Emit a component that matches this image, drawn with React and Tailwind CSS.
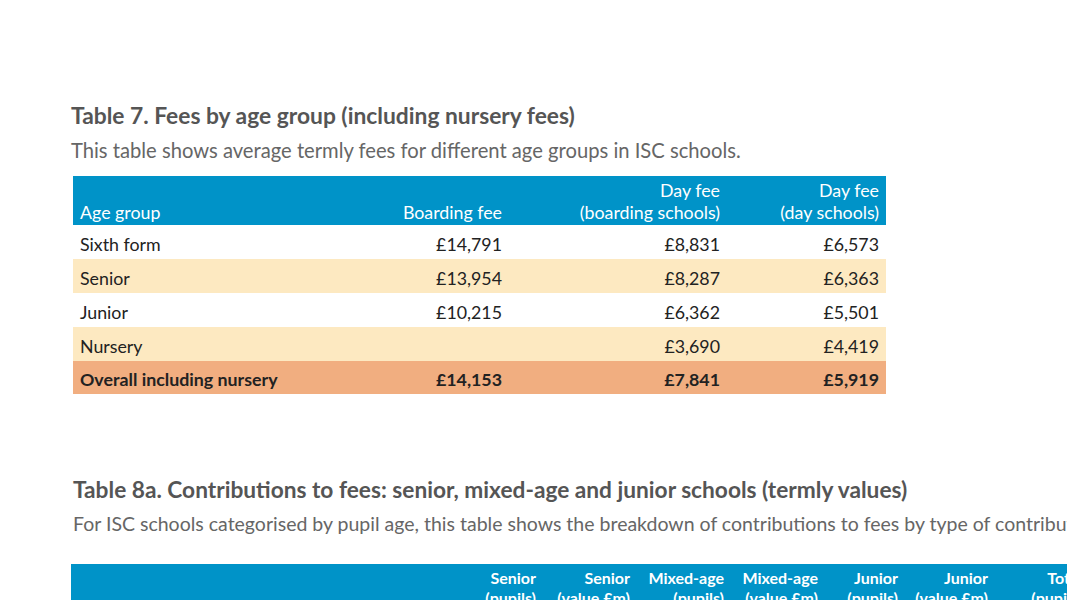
import React from 'react'

const rows = [
    { label: 'Sixth form', boarding: '£14,791', dayBoarding: '£8,831', day: '£6,573', band: false },
    { label: 'Senior', boarding: '£13,954', dayBoarding: '£8,287', day: '£6,363', band: true },
    { label: 'Junior', boarding: '£10,215', dayBoarding: '£6,362', day: '£5,501', band: false },
    { label: 'Nursery', boarding: '', dayBoarding: '£3,690', day: '£4,419', band: true },
]

const contribHeads = [
    ['Senior', '(pupils)', 'w-[94px]'],
    ['Senior', '(value £m)', 'w-[94px]'],
    ['Mixed-age', '(pupils)', 'w-[94px]'],
    ['Mixed-age', '(value £m)', 'w-[94px]'],
    ['Junior', '(pupils)', 'w-[80px]'],
    ['Junior', '(value £m)', 'w-[90px]'],
    ['Total', '(pupils)', 'w-[94px]'],
]

const App = () => {
    return (
        <div className="w-[1067px] h-[600px] overflow-hidden bg-white font-['Lato',sans-serif]">
            <div className="pt-[101px] pl-[71px]">
                <h2 className="text-[22.8px] leading-[28px] font-bold text-[#555555] whitespace-nowrap">
                    Table 7. Fees by age group (including nursery fees)
                </h2>
                <p className="mt-[8px] text-[20.2px] leading-[26px] text-[#666666] whitespace-nowrap">
                    This table shows average termly fees for different age groups in ISC schools.
                </p>

                <div className="mt-[13px] ml-[2px] w-[813px] text-[17.8px] text-[#222222]">
                    <div className="grid grid-cols-[300px_136px_218px_159px] h-[49px] bg-[#0093c8] text-white items-end pb-[2px] leading-[22px]">
                        <div className="pl-[7px]">Age group</div>
                        <div className="text-right pr-[7px]">Boarding fee</div>
                        <div className="text-right pr-[7px]">Day fee<br />(boarding schools)</div>
                        <div className="text-right pr-[7px]">Day fee<br />(day schools)</div>
                    </div>
                    {rows.map((r) => (
                        <div key={r.label}
                             className={r.band
                                 ? 'grid grid-cols-[300px_136px_218px_159px] h-[34px] items-center pt-[5px] bg-[#fde9c1]'
                                 : 'grid grid-cols-[300px_136px_218px_159px] h-[34px] items-center pt-[5px] bg-white'}>
                            <div className="pl-[7px]">{r.label}</div>
                            <div className="text-right pr-[7px]">{r.boarding}</div>
                            <div className="text-right pr-[7px]">{r.dayBoarding}</div>
                            <div className="text-right pr-[7px]">{r.day}</div>
                        </div>
                    ))}
                    <div className="grid grid-cols-[300px_136px_218px_159px] h-[33px] items-center pt-[3px] bg-[#f1ae80] font-bold">
                        <div className="pl-[7px]">Overall including nursery</div>
                        <div className="text-right pr-[7px]">£14,153</div>
                        <div className="text-right pr-[7px]">£7,841</div>
                        <div className="text-right pr-[7px]">£5,919</div>
                    </div>
                </div>

                <h2 className="mt-[82px] ml-[2px] text-[22.7px] leading-[28px] font-bold text-[#555555] whitespace-nowrap">
                    Table 8a. Contributions to fees: senior, mixed-age and junior schools (termly values)
                </h2>
                <p className="mt-[7px] ml-[2px] text-[19.5px] leading-[26px] text-[#666666] whitespace-nowrap">
                    For ISC schools categorised by pupil age, this table shows the breakdown of contributions to fees by type of contribution.
                </p>

                <div className="mt-[27px] flex w-[1100px] h-[60px] bg-[#0093c8] text-white text-[16px] leading-[20px] font-bold pt-[4px]">
                    <div className="w-[378px] shrink-0"></div>
                    {contribHeads.map(([a, b, w], i) => (
                        <div key={i} className={w + ' shrink-0 text-right pr-[7px] whitespace-nowrap'}>
                            {a}<br />{b}
                        </div>
                    ))}
                </div>
            </div>
        </div>
    )
}

export default App
